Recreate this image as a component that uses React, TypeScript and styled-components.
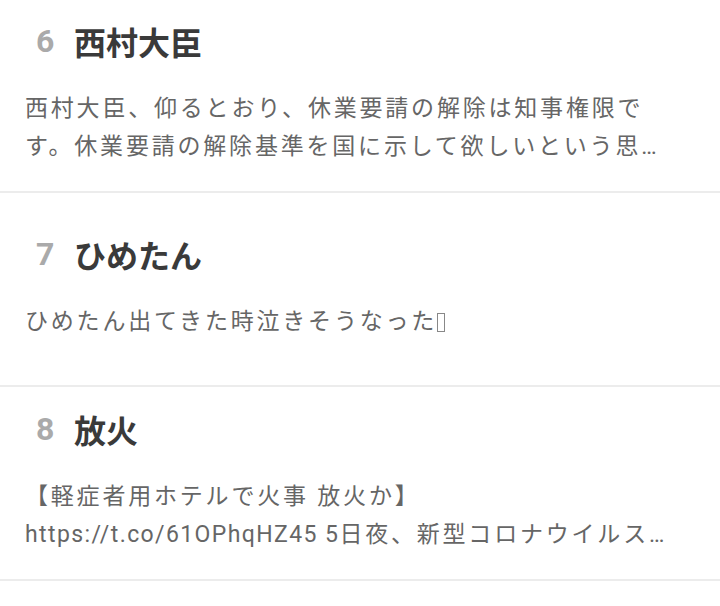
import { ReactNode } from "react";
import styled, { createGlobalStyle } from "styled-components";

const GlobalStyle = createGlobalStyle`
  html, body {
    margin: 0;
    padding: 0;
    background: #fff;
    overflow: hidden;
  }
  body {
    font-family: Roboto, "Noto Sans CJK JP", sans-serif;
  }
`;

interface Trend {
  rank: number;
  title: string;
  lines: ReactNode[];
}

const List = styled.div`
  display: flex;
  flex-direction: column;
  margin-top: -1px;
`;

const Card = styled.div`
  height: 194px;
  box-sizing: border-box;
  display: flex;
  flex-direction: column;
  justify-content: center;
  gap: 29px;
  padding: 0 24px 4px 25px;
  border-bottom: 2px solid #ececec;
`;

const Head = styled.div`
  display: flex;
  align-items: center;
  gap: 19px;
  padding-left: 11px;
  height: 40px;
`;

const Rank = styled.span`
  font-family: Roboto, sans-serif;
  font-weight: 700;
  font-size: 32px;
  color: #aaaaaa;
  width: 19px;
`;

const Title = styled.h2`
  margin: 0;
  font-family: "Noto Sans CJK JP", sans-serif;
  font-weight: 700;
  font-size: 32px;
  line-height: 40px;
  color: #3a3a3a;
`;

const Body = styled.div`
  display: flex;
  flex-direction: column;
  font-family: Roboto, "Noto Sans CJK JP", sans-serif;
  font-size: 23px;
  line-height: 38px;
  letter-spacing: 2.8px;
  color: #666666;
`;

const Line = styled.span`
  white-space: nowrap;
`;

const Latin = styled.span`
  letter-spacing: 1.4px;
`;

const Tofu = styled.span`
  display: inline-block;
  width: 8px;
  height: 19px;
  border: 1px solid #888;
  box-sizing: border-box;
  vertical-align: -3px;
`;

const trends: Trend[] = [
  {
    rank: 6,
    title: "西村大臣",
    lines: [
      "西村大臣、仰るとおり、休業要請の解除は知事権限で",
      "す。休業要請の解除基準を国に示して欲しいという思…",
    ],
  },
  {
    rank: 7,
    title: "ひめたん",
    lines: [
      <>
        ひめたん出てきた時泣きそうなった
        <Tofu />
      </>,
    ],
  },
  {
    rank: 8,
    title: "放火",
    lines: [
      "【軽症者用ホテルで火事 放火か】",
      <>
        <Latin>https://t.co/61OPhqHZ45 5</Latin>日夜、新型コロナウイルス…
      </>,
    ],
  },
];

export default function App() {
  return (
    <>
      <GlobalStyle />
      <List>
        {trends.map((t) => (
          <Card key={t.rank}>
            <Head>
              <Rank>{t.rank}</Rank>
              <Title>{t.title}</Title>
            </Head>
            <Body>
              {t.lines.map((l, i) => (
                <Line key={i}>{l}</Line>
              ))}
            </Body>
          </Card>
        ))}
      </List>
    </>
  );
}
